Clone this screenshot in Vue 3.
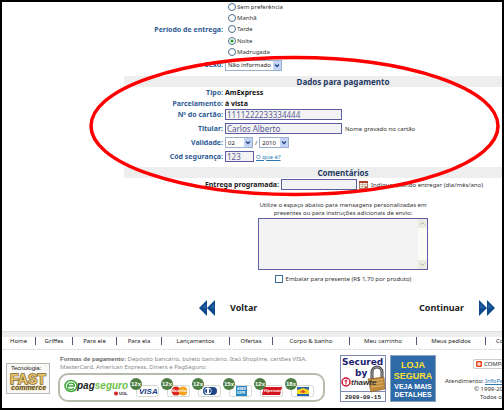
<script setup>
import { ref } from 'vue'

const periods = ['Sem preferência', 'Manhã', 'Tarde', 'Noite', 'Madrugada']
const period = ref('Noite')
const gender = ref('Não informado')
const cardNumber = ref('1111222233334444')
const holder = ref('Carlos Alberto')
const month = ref('02')
const year = ref('2010')
const code = ref('123')
const schedule = ref('')
const message = ref('')
const gift = ref(false)

const menu = [
  'Home', 'Griffes', 'Para ele', 'Para ela', 'Lançamentos',
  'Ofertas', 'Corpo & banho', 'Meu carrinho', 'Meus pedidos', 'Contato',
]
const cards = [
  { times: '12x', brand: 'visa' },
  { times: '12x', brand: 'master' },
  { times: '12x', brand: 'diners' },
  { times: '15x', brand: 'amex' },
  { times: '12x', brand: 'hiper' },
  { times: '18x', brand: 'bb' },
]
</script>

<template>
  <div class="page">
    <main class="form">
      <div class="row">
        <span id="period" class="label">Período de entrega:</span>
        <div class="radios" role="radiogroup" aria-labelledby="period">
          <label v-for="p in periods" :key="p" class="radio">
            <input v-model="period" type="radio" name="period" :value="p" />{{ p }}
          </label>
        </div>
      </div>
      <div class="row sex">
        <label class="label" for="gender">Sexo:</label>
        <span class="select wide">
          <select id="gender" v-model="gender"><option>Não informado</option></select>
          <svg viewBox="0 0 8 9"><path d="M2 3.5 4 5.5 6 3.5" /></svg>
        </span>
      </div>

      <h2 class="bar">Dados para pagamento</h2>
      <div class="row plain"><span class="label">Tipo:</span><b>AmExpress</b></div>
      <div class="row plain"><span class="label">Parcelamento:</span><b>à vista</b></div>
      <div class="fields">
        <div class="row">
          <label class="label" for="card">Nº do cartão:</label>
          <input id="card" v-model="cardNumber" class="text long" type="text" />
        </div>
        <div class="row">
          <label class="label" for="holder">Titular:</label>
          <div class="line">
            <input id="holder" v-model="holder" class="text long" type="text" />
            <span>Nome gravado no cartão</span>
          </div>
        </div>
        <div class="row">
          <label class="label" for="month">Validade:</label>
          <div class="line date">
            <span class="select">
              <select id="month" v-model="month"><option>02</option></select>
              <svg viewBox="0 0 8 9"><path d="M2 3.5 4 5.5 6 3.5" /></svg>
            </span>
            <span>/</span>
            <span class="select year">
              <select v-model="year" aria-label="Ano"><option>2010</option></select>
              <svg viewBox="0 0 8 9"><path d="M2 3.5 4 5.5 6 3.5" /></svg>
            </span>
          </div>
        </div>
        <div class="row">
          <label class="label" for="code">Cód segurança:</label>
          <div class="line date">
            <input id="code" v-model="code" class="text short" type="text" />
            <a href="#">O que é?</a>
          </div>
        </div>
      </div>

      <h2 class="bar second">Comentários</h2>
      <div class="row delivery">
        <label class="label dark" for="schedule">Entrega programada:</label>
        <div class="line date">
          <input id="schedule" v-model="schedule" class="text medium" type="text" />
          <svg class="calendar" viewBox="0 0 9 8">
            <rect x=".5" y=".5" width="8" height="7" fill="#fff8e8" stroke="#a08070" />
            <path d="M0 1h9" stroke="#b04030" stroke-width="2" />
            <path d="M1 3.5h7M1 5.5h7M3.5 2v6M6 2v6" stroke="#b09a88" stroke-width=".6" />
            <path d="M6 5.500h2v1.500H6z" fill="#d05040" />
          </svg>
          <span class="hint">Indique quando entregar (dia/mês/ano)</span>
        </div>
      </div>

      <div class="comments">
        <label for="message">Utilize o espaço abaixo para mensagens personalizadas em<br />presentes ou para instruções adicionais de envio:</label>
        <div class="area">
          <textarea id="message" v-model="message"></textarea>
          <div class="scroll" aria-hidden="true">
            <svg viewBox="0 0 9 9"><path d="M2.500 5.500 4.500 3.500 6.500 5.500" /></svg>
            <svg viewBox="0 0 9 9"><path d="M2.500 3.500 4.500 5.500 6.500 3.500" /></svg>
          </div>
        </div>
        <label class="gift"><input v-model="gift" type="checkbox" />Embalar para presente (R$ 1,70 por produto)</label>
      </div>
    </main>

    <div class="steps">
      <button type="button">
        <svg viewBox="0 0 16 16"><path d="M8 0v16L0 8zM16 0v16L8 8z" fill="#0f4a8c" /><path d="M7 4v4H3zM15 4v4h-4z" fill="#2464a4" /></svg>
        Voltar
      </button>
      <button type="button">
        Continuar
        <svg viewBox="0 0 16 16"><path d="M0 0v16l8-8zM8 0v16l8-8z" fill="#0f4a8c" /><path d="M1 4v4h4zM9 4v4h4z" fill="#2464a4" /></svg>
      </button>
    </div>

    <nav>
      <a v-for="m in menu" :key="m" href="#">{{ m }}</a>
    </nav>

    <footer>
      <svg class="fast" viewBox="0 0 44 31">
        <rect x=".5" y=".5" width="43" height="30" fill="#f8f8f6" stroke="#b8b8b0" />
        <text x="5" y="7" font-size="6" fill="#222">Tecnologia:</text>
        <text x="4" y="21" font-size="14" font-weight="bold" fill="#e5c06a" stroke="#7a6228" stroke-width="1.4" paint-order="stroke">FAST</text>
        <text x="5" y="27" font-size="7" font-weight="bold" font-style="italic" fill="#5b4a26" stroke="#f0dca0" stroke-width=".8" paint-order="stroke">commerce</text>
      </svg>

      <div class="payment">
        <p><b>Formas de pagamento:</b> Depósito bancário, boleto bancário, Itaú Shopline, cartões VISA,<br />MasterCard, American Express, Diners e PagSeguro:</p>
        <div class="pag">
          <svg class="brand" viewBox="0 0 66 20">
            <ellipse cx="7" cy="8" rx="6" ry="5.500" fill="#fff" stroke="#3da639" stroke-width="1.500" />
            <path d="M3.500 8h7C10.500 4.500 4.500 4 3.500 8s4.500 4 6.500 2.200" fill="none" stroke="#3da639" stroke-width="1.300" />
            <text x="13" y="11" font-size="10" font-weight="bold" font-style="italic" fill="#222">pag<tspan fill="#6cc04a">seguro</tspan></text>
            <circle cx="52" cy="15.500" r="2" fill="#d02020" />
            <text x="55" y="17" font-size="4" font-weight="bold" fill="#222">UOL</text>
          </svg>
          <svg v-for="(c, i) in cards" :key="i" class="card" viewBox="0 0 31 20">
            <rect x="6.500" y="7.500" width="22" height="11" rx="2" fill="#fff" stroke="#d4d8d0" />
            <text v-if="c.brand === 'visa'" x="9" y="16" font-size="8" font-weight="bold" font-style="italic" fill="#173a80">VISA</text>
            <g v-else-if="c.brand === 'master'">
              <circle cx="15" cy="13" r="4.500" fill="#d9271c" /><circle cx="22" cy="13" r="4.500" fill="#f5a21b" />
              <text x="11" y="14" font-size="3" font-weight="bold" font-style="italic" fill="#fff">MasterCard</text>
            </g>
            <g v-else-if="c.brand === 'diners'">
              <rect x="11" y="9" width="14" height="8" rx="4" fill="#1d4585" /><circle cx="16" cy="13" r="3.500" fill="#fff" />
              <path d="M15 11v4a2 2 0 0 1 0-4M17 11v4a2 2 0 0 0 0-4" fill="#1d4585" />
            </g>
            <g v-else-if="c.brand === 'amex'">
              <rect x="13" y="8" width="11" height="10" fill="#2685c4" />
              <text x="14" y="12" font-size="3" font-weight="bold" fill="#fff">AMER</text>
              <text x="14" y="16" font-size="3" font-weight="bold" fill="#fff">EXPR</text>
            </g>
            <g v-else-if="c.brand === 'hiper'">
              <path d="M10 9h18l-2 8H8z" fill="#d5141c" />
              <text x="10" y="14" font-size="4" font-weight="bold" font-style="italic" fill="#fff">Hipercard</text>
            </g>
            <g v-else>
              <rect x="12" y="9" width="12" height="9" fill="#f6d51f" /><path d="M12 9h12v3l-6-2-6 2z" fill="#2a62b2" />
              <path d="M12 16h12v2H12z" fill="#2a62b2" /><path d="m15 14 3-2 3 2-3 1z" fill="#e0452a" />
            </g>
            <circle cx="6" cy="6" r="6" fill="#4c7d42" />
            <text x="6" y="8" text-anchor="middle" font-size="6" font-weight="bold" fill="#fff">{{ c.times }}</text>
          </svg>
        </div>
      </div>

      <svg class="seal" viewBox="0 0 46 47">
        <rect x=".5" y=".5" width="45" height="46" fill="#fff" stroke="#8088b0" />
        <path d="M0 36.500h46" stroke="#8088b0" />
        <g font-weight="bold" fill="#1a2070">
          <text x="2" y="10" font-size="9" class="dejavu">Secured</text>
          <text x="15" y="21" font-size="9" class="dejavu">by</text>
        </g>
        <circle cx="6" cy="27" r="4" fill="none" stroke="#d01838" stroke-width="1.500" />
        <path d="M6 24.500v5M4.500 26h3" stroke="#d01838" />
        <path d="M32 24v-7a5 5 0 0 1 10 0v6" fill="none" stroke="#444" stroke-width="3" />
        <path d="M32 24v-7a5 5 0 0 1 10 0v6" fill="none" stroke="#aaa" />
        <path d="m28 24 16-2 1 12-14 3z" fill="#c08a3a" stroke="#7d561e" stroke-width=".6" />
        <path d="m31 26 12-1.500M31 29l12-1.500M31 32l12-1.500" stroke="#e0b468" />
        <text x="11" y="30" font-size="8" font-weight="bold" font-style="italic" fill="#333">thawte</text>
        <text x="5" y="44" font-size="6" font-weight="bold" fill="#222" class="mono">2009-09-15</text>
      </svg>

      <a class="safe" href="#"><strong>LOJA<br />SEGURA</strong><span>VEJA MAIS<br />DETALHES</span></a>

      <div class="contact">
        <button type="button"><svg viewBox="0 0 6 6"><rect width="6" height="6" rx="1" fill="#e8502a" /><path d="M3 1v4M1 3h4" stroke="#fff" /></svg>COMPARTILHE</button>
        <p>Atendimento: <a href="#">InfoPerfumes</a></p>
        <p class="in1">© 1999-2009</p>
        <p class="in2">Todos os direitos</p>
      </div>
    </footer>

    <svg class="highlight" viewBox="0 0 412 142" aria-hidden="true">
      <ellipse cx="205.500" cy="71" rx="203.500" ry="68.500" />
    </svg>
  </div>
</template>

<style>
body { background: #fff; }
</style>

<style scoped>
* { box-sizing: border-box; }
.page {
  position: relative;
  overflow: hidden;
  border: 2px solid #000;
  background: #fff;
  color: #333;
  font: 6px/8px "Noto Sans", "Open Sans", sans-serif;
}
svg { display: block; flex: none; }
p, h2 { margin: 0; }
input, select, textarea, button { font: inherit; color: inherit; margin: 0; }
a { color: #2a7ab0; }

.form { margin: 0 -60px 0 122px; }
.row {
  display: grid;
  grid-template-columns: 99px 1fr;
  column-gap: 2px;
  align-items: center;
}
.label {
  text-align: right;
  font: bold 7px/10px "Noto Sans", sans-serif;
  color: #2f5c94;
  white-space: nowrap;
}
.label.dark { color: #222; }
.row b { font: bold 7px/10px "Noto Sans", sans-serif; color: #111; }
.plain { height: 11px; }

.radios { display: grid; grid-auto-rows: 1fr; height: 57px; margin: -1px 0 0 3px; }
.radio { display: flex; align-items: center; gap: 1px; }
.radio input {
  appearance: none;
  width: 8px;
  height: 8px;
  border: 1px solid #4a7090;
  border-radius: 50%;
  background: #fff;
}
.radio input:checked { background: radial-gradient(circle, #2aa52a 0 1px, #fff 2px); }

.sex { height: 14px; margin: 0 0 4px; }
.select {
  display: flex;
  position: relative;
  width: 28px;
  height: 11px;
  border: 1px solid #9ab0cc;
}
.select.wide { width: 57px; }
.select.year { width: 30px; }
.select select {
  appearance: none;
  width: 100%;
  border: 0;
  padding: 0 0 0 2px;
  background: #fff;
  color: #222;
}
.select svg {
  position: absolute;
  right: 0;
  top: 0;
  width: 8px;
  height: 9px;
  background: #c3d4f6;
  pointer-events: none;
}
.select path { fill: none; stroke: #2a4a80; stroke-width: 1.3; }

.bar {
  height: 11px;
  background: #eee;
  color: #1f3a64;
  font: bold 8px/11px "Noto Sans", sans-serif;
  text-align: center;
}
.fields { display: grid; gap: 3px; }
.fields .row { height: 11px; }
.line { display: flex; align-items: center; gap: 3px; }
.date { gap: 2px; }
.text {
  height: 11px;
  padding: 0 1px;
  border: 1px solid #5c5ca4;
  border-radius: 0;
  background: #f3f3f3;
  color: #5c5c94;
  font: 8px/9px "Noto Sans", sans-serif;
}
.long { width: 117px; }
.short { width: 29px; }
.medium { width: 76px; }

.second { margin: 5px 0 1px; }
.delivery { grid-template-columns: 155px 1fr; }
.calendar { width: 9px; height: 8px; }
.hint { padding-left: 1px; }

.comments {
  display: flex;
  flex-direction: column;
  align-items: center;
  padding-top: 11px;
  text-align: center;
}
.area {
  display: flex;
  width: 170px;
  height: 52px;
  margin-top: 1px;
  border: 1px solid #5c5ca4;
  background: #f3f3f3;
}
.area textarea { flex: 1; min-width: 0; padding: 0; border: 0; background: none; resize: none; }
.scroll { display: flex; flex-direction: column; justify-content: space-between; background: #fcfcf6; }
.scroll svg { width: 9px; height: 9px; background: #ecebe2; }
.scroll path { fill: none; stroke: #aaa; }
.gift { display: flex; align-items: center; gap: 3px; margin-top: 5px; }
.gift input { appearance: none; width: 8px; height: 8px; border: 1px solid #3f6f98; background: #fff; }

.steps { display: flex; justify-content: space-between; padding: 17px 7px 15px 197px; }
.steps button {
  display: flex;
  align-items: center;
  gap: 15px;
  padding: 0;
  border: 0;
  background: none;
  color: #222;
  font: bold 9px/16px "Noto Sans", sans-serif;
}
.steps svg { width: 16px; height: 16px; }

nav {
  display: grid;
  grid-template-columns: 34px 37px 44px 45px 68px 43px 77px 67px 69px 1fr;
  padding: 5px 0 4px;
  border-top: 1px solid #ddd;
  border-bottom: 1px dashed #ddd;
  background: linear-gradient(#eee 0 5px, #fff 5px);
}
nav a {
  border-right: 1px solid #557;
  color: #222;
  line-height: 8px;
  text-align: center;
  text-decoration: none;
  white-space: nowrap;
}
nav a:last-child { border: 0; padding-left: 10px; text-align: left; }

footer { display: flex; align-items: flex-start; height: 58px; padding: 5px 0; }
footer text { font-family: "Liberation Sans", sans-serif; }
footer .dejavu { font-family: "DejaVu Sans", sans-serif; }
footer .mono { font-family: "Liberation Mono", monospace; }
.fast { width: 44px; height: 31px; margin: 8px 8px 0 4px; }
.payment { flex: none; width: 267px; margin-right: 15px; }
.payment p { padding-left: 2px; color: #888; white-space: nowrap; }
.payment b { color: #666; font: bold 6px/8px "Liberation Sans", sans-serif; }
.pag {
  display: flex;
  align-items: center;
  height: 29px;
  margin-top: 2px;
  padding-left: 4px;
  border: 2px solid #b4bcac;
  border-radius: 10px;
}
.brand { width: 66px; height: 20px; }
.card { width: 31px; height: 20px; }
.seal { width: 46px; height: 47px; margin-right: 4px; }
.safe {
  flex: none;
  width: 46px;
  height: 47px;
  padding-top: 4px;
  border: 1px solid #8aa4c0;
  background: #2e6aa8;
  color: #fff;
  font: bold 7px/8px "Liberation Sans", sans-serif;
  text-align: center;
  text-decoration: none;
  white-space: nowrap;
}
.safe strong { display: block; margin-bottom: 1px; color: #ffe030; font-size: 9px; line-height: 11px; }
.contact { flex: none; width: 66px; margin-left: 9px; padding-top: 4px; white-space: nowrap; }
.contact button {
  display: flex;
  align-items: center;
  gap: 2px;
  height: 10px;
  margin: 0 0 8px 28px;
  padding: 0 2px;
  border: 1px solid #ccc;
  border-radius: 2px;
  background: #fff;
}
.contact svg { width: 6px; height: 6px; }
.in1 { padding-left: 29px; }
.in2 { padding-left: 35px; }

.highlight { position: absolute; left: 87px; top: 53px; width: 412px; height: 142px; pointer-events: none; }
.highlight ellipse { fill: none; stroke: #f00; stroke-width: 3.5; }
</style>
